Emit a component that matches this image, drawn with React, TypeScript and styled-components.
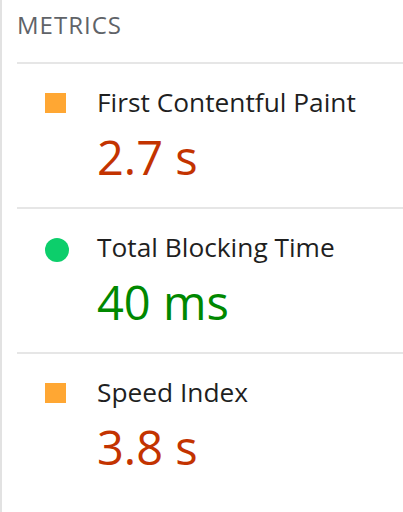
import React from "react";
import styled, { createGlobalStyle } from "styled-components";

const Global = createGlobalStyle`
  html, body { margin: 0; padding: 0; background: #fff; }
  body { font-family: "Open Sans", "Noto Sans", sans-serif; }
`;

const Panel = styled.div`
  height: 512px;
  box-sizing: border-box;
  border-left: 2px solid #e2e2e2;
  padding-left: 15px;
  overflow: hidden;
`;

const Heading = styled.div`
  font-size: 24px;
  letter-spacing: 1px;
  color: #5f6368;
  line-height: 30px;
  padding-top: 10px;
  height: 64px;
  box-sizing: border-box;
  border-bottom: 2px solid #e6e6e6;
`;

const Row = styled.div`
  display: grid;
  grid-template-columns: 80px 1fr;
  height: 145px;
  box-sizing: border-box;
  border-bottom: 2px solid #e6e6e6;
  padding-top: 20px;
  &:last-child { border-bottom: none; }
`;

const IconCell = styled.div`
  display: flex;
  justify-content: flex-start;
  padding-left: 28px;
  padding-top: 9px;
`;

const Square = styled.div`
  width: 21px;
  height: 20px;
  background: #ffa733;
`;

const Circle = styled.div`
  width: 24px;
  height: 24px;
  border-radius: 50%;
  background: #0cce6b;
`;

const Info = styled.div`
  display: flex;
  flex-direction: column;
`;

const Title = styled.div`
  font-size: 26.3px;
  line-height: 36px;
  color: #1f1f1f;
`;

const Value = styled.div<{ $pass: boolean }>`
  font-size: 47px;
  line-height: 60px;
  margin-top: 7px;
  color: ${(p) => (p.$pass ? "#008800" : "#c33300")};
`;

const metrics = [
  { title: "First Contentful Paint", value: "2.7 s", pass: false },
  { title: "Total Blocking Time", value: "40 ms", pass: true },
  { title: "Speed Index", value: "3.8 s", pass: false },
];

export default function App() {
  return (
    <>
      <Global />
      <Panel>
        <Heading>METRICS</Heading>
        {metrics.map((m) => (
          <Row key={m.title}>
            <IconCell>{m.pass ? <Circle /> : <Square />}</IconCell>
            <Info>
              <Title>{m.title}</Title>
              <Value $pass={m.pass}>{m.value}</Value>
            </Info>
          </Row>
        ))}
      </Panel>
    </>
  );
}
